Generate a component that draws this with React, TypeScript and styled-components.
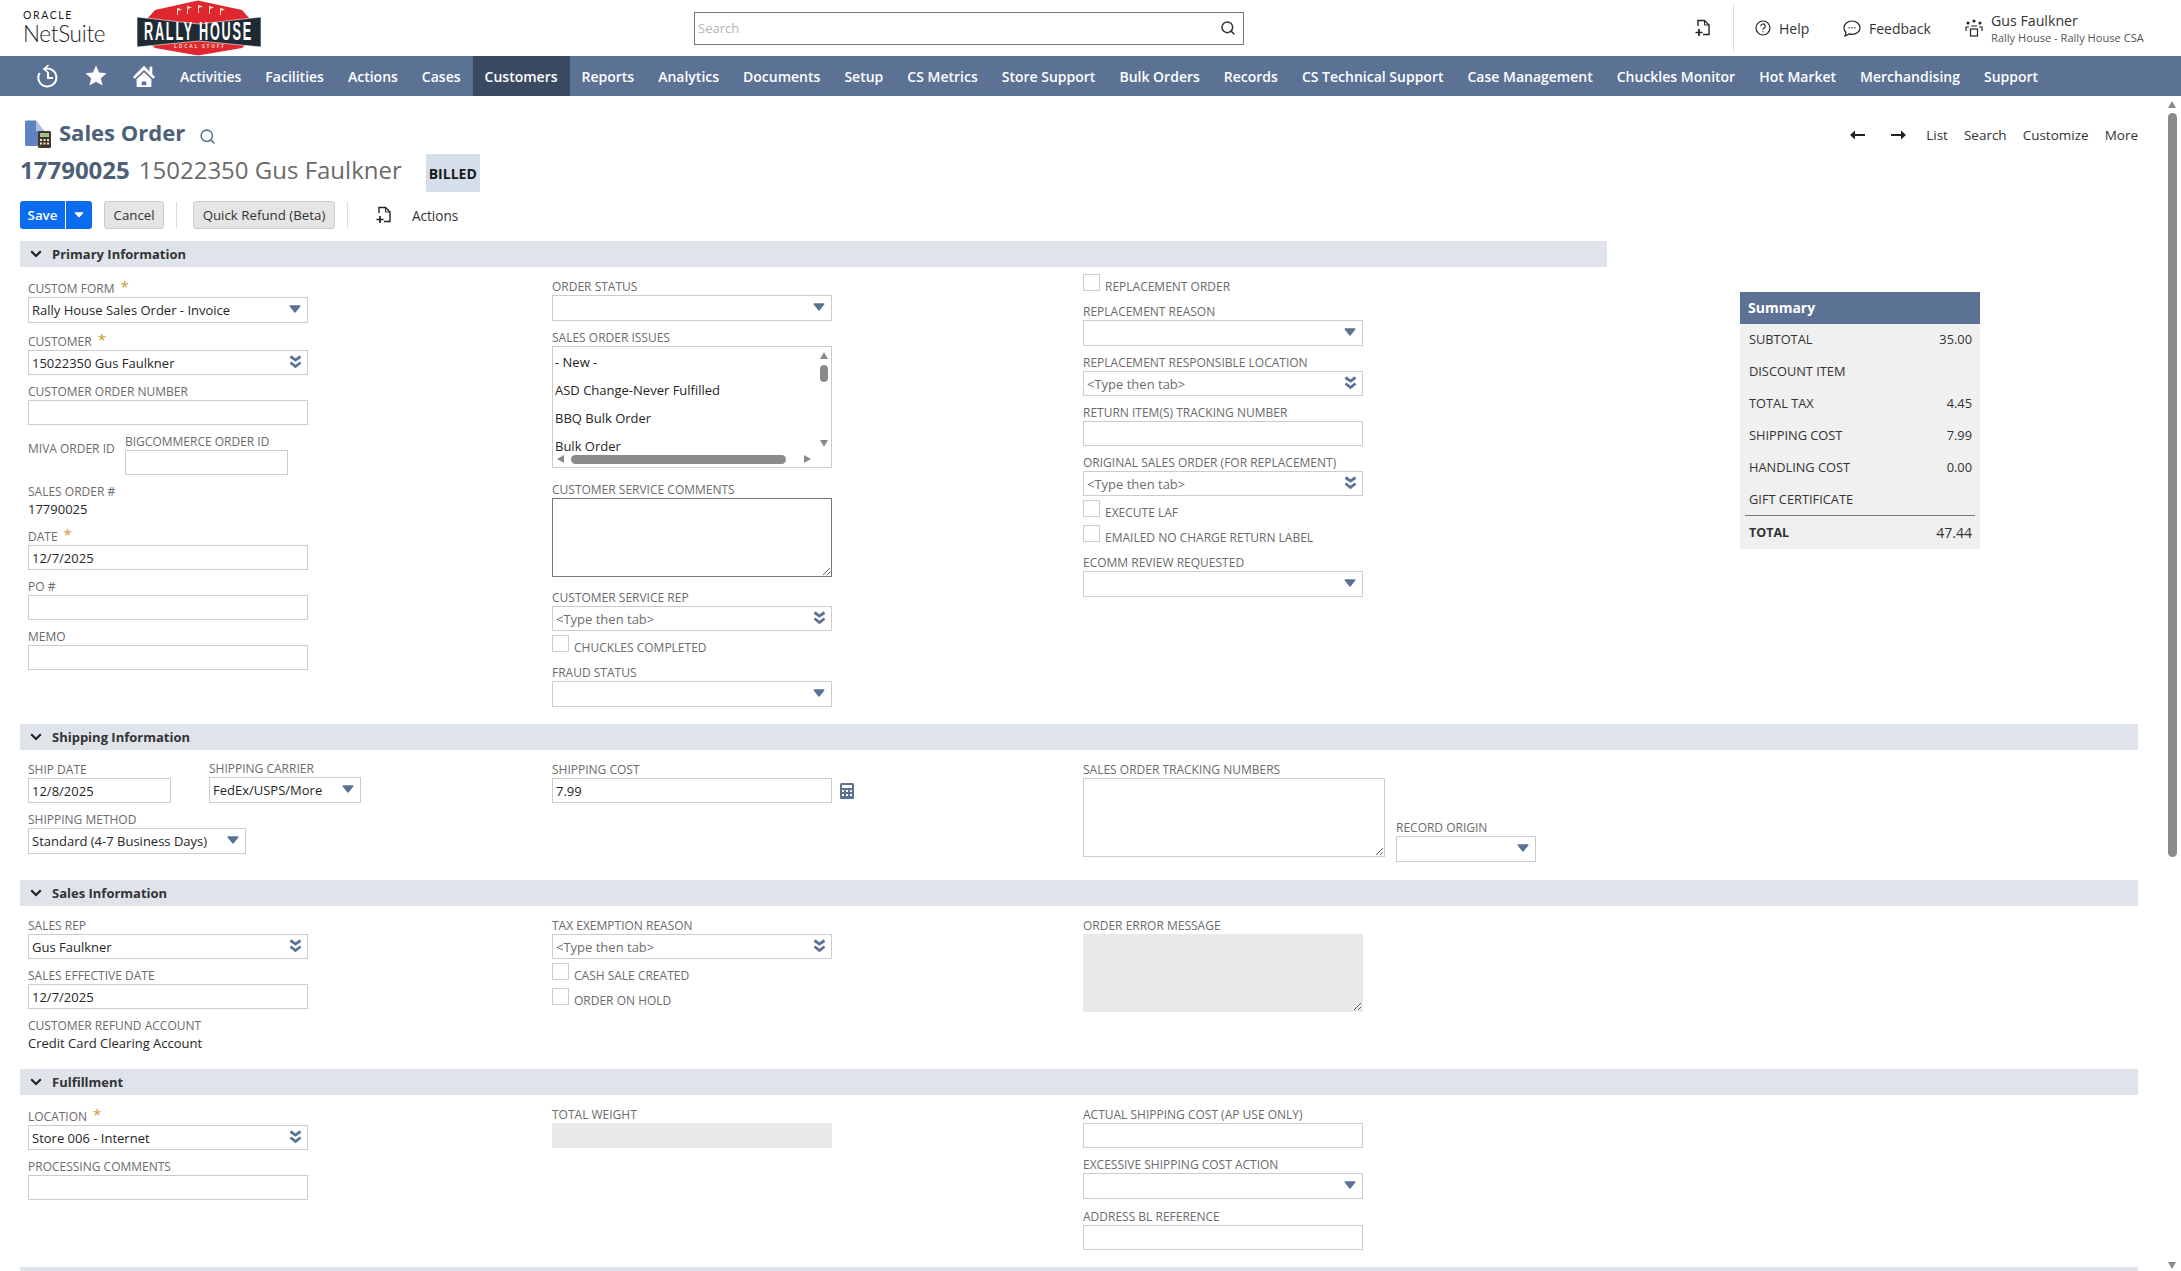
import React from 'react';
import styled, { createGlobalStyle } from 'styled-components';
import { Search } from 'lucide-react';

const BLUE = '#5b7295';
const BORDER = '#cccccc';
const LABEL = '#6b6b6b';
const TEXT = '#262626';

const GlobalStyle = createGlobalStyle`
  html, body {
    margin: 0;
    padding: 0;
    height: 1271px;
    overflow: hidden;
    background: #fff;
    font-family: "Open Sans", "Liberation Sans", sans-serif;
  }
  * { box-sizing: border-box; }
`;

const NAV_ITEMS = [
  'Activities', 'Facilities', 'Actions', 'Cases', 'Customers', 'Reports', 'Analytics', 'Documents',
  'Setup', 'CS Metrics', 'Store Support', 'Bulk Orders', 'Records', 'CS Technical Support',
  'Case Management', 'Chuckles Monitor', 'Hot Market', 'Merchandising', 'Support',
];

const SUMMARY = [
  ['SUBTOTAL', '35.00'],
  ['DISCOUNT ITEM', ''],
  ['TOTAL TAX', '4.45'],
  ['SHIPPING COST', '7.99'],
  ['HANDLING COST', '0.00'],
  ['GIFT CERTIFICATE', ''],
];

function NewRecordIcon({ size = 18 }: { size?: number }) {
  return (
    <svg width={size} height={size} viewBox="0 0 18 18" fill="none" stroke="#222" strokeWidth="1.4">
      <path d="M4 7V1.500h6.500l4.500 4.500v9.500H9" />
      <path d="M10.500 1.500V6H15" strokeWidth="1" />
      <path d="M5 10v7M1.500 13.500h7" strokeWidth="1.700" />
    </svg>
  );
}

function SelectArrow() {
  return (
    <svg width="12" height="8" viewBox="0 0 12 8">
      <path d="M1.200 1h9.600L6 7z" fill={BLUE} stroke={BLUE} strokeWidth="1.400" strokeLinejoin="round" />
    </svg>
  );
}

function LookupArrows() {
  return (
    <LookupSvg width="13" height="14" viewBox="0 0 13 14" fill="none" stroke={BLUE} strokeWidth="2.800">
      <path d="M1.500 1.500l5 3.600 5-3.600M1.500 7.500l5 4 5-4" />
    </LookupSvg>
  );
}

function NetSuiteLogo() {
  return (
    <LogoStack>
      <OracleMark>ORACLE</OracleMark>
      <NetSuiteMark>NetSuite</NetSuiteMark>
    </LogoStack>
  );
}

function RallyLogo() {
  return (
    <LogoSvg width="124" height="56" viewBox="0 0 124 56">
      <path d="M18 10 61 .5 105 10l8 9v22l-8 7-44 7.500-43-7.500-8-7V19z" fill="#e0262f" />
      <path d="M0 17 62 24l62-7v30L62 41 0 47z" fill="#1f2b34" stroke="#fff" strokeWidth=".6" />
      <path
        d="M40 8h1v7h-1zM41 8l4 1.500-4 1.500zM50 6h1v8h-1zM51 6l4 1.500-4 1.500zM61 5h1v8h-1zM62 5l4 1.500-4 1.500zM72 6h1v8h-1zM73 6l4 1.500-4 1.500zM83 8h1v7h-1zM84 8l4 1.500-4 1.500z"
        fill="#f7d7b5"
      />
      <RallyText x="7" y="39.500" textLength="109" lengthAdjust="spacingAndGlyphs">
        RALLY HOUSE
      </RallyText>
      <LocalText x="37" y="47.500" textLength="50" lengthAdjust="spacing">
        LOCAL STUFF
      </LocalText>
    </LogoSvg>
  );
}

function PageIcon() {
  return (
    <svg width="26" height="28" viewBox="0 0 26 28">
      <path d="M0 2a1.500 1.500 0 0 1 1.500-1.500H11L19 11v15H1.500A1.500 1.500 0 0 1 0 24.500z" fill="#5f82c4" />
      <path d="M11 .5 19 11h-8z" fill="#aabfe3" />
      <rect x="13" y="11" width="13" height="17" rx="1.500" fill="#43372c" />
      <rect x="15" y="13" width="9" height="4" fill="#9fc28c" />
      <path d="M15 19h2v2h-2zM18.500 19h2v2h-2zM22 19h2v2h-2zM15 22.500h2v2h-2zM18.500 22.500h2v2h-2zM22 22.500h2v2h-2z" fill="#f0e6d2" />
    </svg>
  );
}

function Field({ label, req, gap = 8, width = 280, children }: {
  label: string;
  req?: boolean;
  gap?: number;
  width?: number;
  children: React.ReactNode;
}) {
  return (
    <FieldWrap $gap={gap} $width={width}>
      <Label>
        {label}
        {req && <Star>*</Star>}
      </Label>
      {children}
    </FieldWrap>
  );
}

function TextField({ label, value, req, gap, width }: {
  label: string;
  value?: string;
  req?: boolean;
  gap?: number;
  width?: number;
}) {
  return (
    <Field label={label} req={req} gap={gap} width={width}>
      <Control>{value}</Control>
    </Field>
  );
}

function SelectField({ label, value, req, gap, width }: {
  label: string;
  value?: string;
  req?: boolean;
  gap?: number;
  width?: number;
}) {
  return (
    <Field label={label} req={req} gap={gap} width={width}>
      <Control $tall>
        <span>{value}</span>
        <SelectArrow />
      </Control>
    </Field>
  );
}

function LookupField({ label, value, req, gap }: {
  label: string;
  value?: string;
  req?: boolean;
  gap?: number;
}) {
  return (
    <Field label={label} req={req} gap={gap}>
      <Control $muted={!value}>
        <span>{value || '<Type then tab>'}</span>
        <LookupArrows />
      </Control>
    </Field>
  );
}

function CheckField({ label, gap = 4 }: { label: string; gap?: number }) {
  return (
    <CheckRow $gap={gap}>
      <CheckBox />
      <CheckLabel>{label}</CheckLabel>
    </CheckRow>
  );
}

function SectionBar({ title }: { title: string }) {
  return (
    <Bar>
      <svg width="12" height="8" viewBox="0 0 12 8" fill="none" stroke="#222" strokeWidth="2.200">
        <path d="M1.200 1.200 6 6l4.800-4.800" />
      </svg>
      <span>{title}</span>
    </Bar>
  );
}

export default function App() {
  return (
    <Page>
      <GlobalStyle />
      <Header>
        <Logos>
          <NetSuiteLogo />
          <RallyLogo />
        </Logos>
        <SearchBox>
          <span>Search</span>
          <Search size={16} color="#333" strokeWidth={2.200} />
        </SearchBox>
        <HeaderRight>
          <NewRecordIcon />
          <HeaderDivider />
          <HeaderLink $width={88}>
            <svg width="16" height="16" viewBox="0 0 16 16" fill="none" stroke="#222" strokeWidth="1.200">
              <circle cx="8" cy="8" r="7" />
              <path d="M5.800 6.200a2.200 2.200 0 1 1 3.300 1.900c-.8.500-1.100.9-1.100 1.700M8 11.200v1.100" />
            </svg>
            Help
          </HeaderLink>
          <HeaderLink $width={122}>
            <svg width="18" height="17" viewBox="0 0 18 17" fill="none" stroke="#222" strokeWidth="1.200">
              <path d="M9 1c4.400 0 8 2.900 8 6.700s-3.600 6.700-8 6.700c-1 0-2-.2-2.900-.5L2 16l1-3.600C1.700 11.100 1 9.500 1 7.700 1 3.900 4.600 1 9 1z" />
              <path d="M5.600 7.800h1M8.500 7.800h1M11.400 7.800h1" strokeWidth="1.600" />
            </svg>
            Feedback
          </HeaderLink>
          <RoleBlock>
            <svg width="18" height="18" viewBox="0 0 18 18" fill="none" stroke="#222" strokeWidth="1.200">
              <circle cx="9" cy="2" r="1.500" fill="#222" stroke="none" />
              <circle cx="3" cy="4" r="1.500" fill="#222" stroke="none" />
              <circle cx="15" cy="4" r="1.500" fill="#222" stroke="none" />
              <path d="M1 12V8h3M17 12V8h-3M6 7h6" />
              <rect x="5.500" y="10" width="7" height="7" />
            </svg>
            <RoleText>
              <RoleName>Gus Faulkner</RoleName>
              <RoleSub>Rally House - Rally House CSA</RoleSub>
            </RoleText>
          </RoleBlock>
        </HeaderRight>
      </Header>

      <Nav>
        <NavIcon>
          <svg width="24" height="24" viewBox="0 0 24 24" fill="none" stroke="#fff" strokeWidth="2">
            <path d="M8 5.200A9 9 0 1 1 3.600 9" />
            <path d="M12.500 1 8 5l4.500 4" strokeWidth="1.600" />
            <path d="M12 8v6h5" />
          </svg>
        </NavIcon>
        <NavIcon>
          <svg width="24" height="24" viewBox="0 0 24 24" fill="#fff">
            <path d="M12 1.500l3.100 7 7.400.7-5.600 5 1.700 7.400L12 17.700l-6.600 3.900 1.700-7.400-5.600-5 7.400-.7z" />
          </svg>
        </NavIcon>
        <NavIcon>
          <svg width="24" height="24" viewBox="0 0 26 26" fill="#fff">
            <path d="M13 2 1 14l2 2L13 6.500 23 16l2-2-3-3V3h-3v5z" />
            <path d="M5 16.500 13 9l8 7.500V25H5zm5.500 2.500v4h5v-4z" fillRule="evenodd" />
          </svg>
        </NavIcon>
        {NAV_ITEMS.map((item) => (
          <NavItem key={item} $active={item === 'Customers'}>
            {item}
          </NavItem>
        ))}
      </Nav>

      <Workspace>
        <Main>
          <TitleRow>
            <PageTitle>
              <PageIcon />
              <h1>Sales Order</h1>
              <Search size={17} color={BLUE} strokeWidth={2.200} />
            </PageTitle>
            <Pager>
              <PagerArrows>
                <svg width="15" height="10" viewBox="0 0 15 10">
                  <path d="M0 5l5-4.500V4h10v2H5v3.500z" fill="#222" />
                </svg>
                <svg width="15" height="10" viewBox="0 0 15 10">
                  <path d="M15 5l-5-4.500V4H0v2h10v3.500z" fill="#222" />
                </svg>
              </PagerArrows>
              <span>List</span>
              <span>Search</span>
              <span>Customize</span>
              <span>More</span>
            </Pager>
          </TitleRow>

          <RecordRow>
            <RecordId>17790025</RecordId>
            <RecordName>15022350 Gus Faulkner</RecordName>
            <StatusBadge>BILLED</StatusBadge>
          </RecordRow>

          <Toolbar>
            <SaveGroup>
              <SaveButton>Save</SaveButton>
              <SaveDrop>
                <svg width="10" height="6" viewBox="0 0 10 6">
                  <path d="M1 .8h8L5 5.200z" fill="#fff" stroke="#fff" strokeLinejoin="round" />
                </svg>
              </SaveDrop>
            </SaveGroup>
            <GrayButton>Cancel</GrayButton>
            <ToolDivider />
            <GrayButton>Quick Refund (Beta)</GrayButton>
            <ToolDivider />
            <ToolAction>
              <NewRecordIcon />
              <span>Actions</span>
            </ToolAction>
          </Toolbar>

          <PrimaryRow>
            <PrimaryLeft>
              <SectionBar title="Primary Information" />
              <Columns $bottom={17}>
                <Column $top={13}>
                  <SelectField label="CUSTOM FORM" value="Rally House Sales Order - Invoice" req gap={0} />
                  <LookupField label="CUSTOMER" value="15022350 Gus Faulkner" req gap={10} />
                  <TextField label="CUSTOMER ORDER NUMBER" />
                  <MivaRow>
                    <MivaLabel>MIVA ORDER ID</MivaLabel>
                    <TextField label="BIGCOMMERCE ORDER ID" width={163} gap={0} />
                  </MivaRow>
                  <Field label="SALES ORDER #">
                    <StaticValue>17790025</StaticValue>
                  </Field>
                  <TextField label="DATE" value="12/7/2025" req gap={11} />
                  <TextField label="PO #" />
                  <TextField label="MEMO" />
                </Column>
                <Column $top={11}>
                  <SelectField label="ORDER STATUS" gap={0} />
                  <Field label="SALES ORDER ISSUES">
                    <ListBox>
                      <ListItems>
                        <ListItem>- New -</ListItem>
                        <ListItem>ASD Change-Never Fulfilled</ListItem>
                        <ListItem>BBQ Bulk Order</ListItem>
                        <ListItem>Bulk Order</ListItem>
                      </ListItems>
                      <VScroll>
                        <ArrowUp />
                        <VThumb />
                        <ArrowDown />
                      </VScroll>
                      <HScroll>
                        <ArrowLeft />
                        <HThumb />
                        <ArrowRight />
                      </HScroll>
                    </ListBox>
                  </Field>
                  <Field label="CUSTOMER SERVICE COMMENTS" gap={13}>
                    <TextArea readOnly $height={79} $dark />
                  </Field>
                  <LookupField label="CUSTOMER SERVICE REP" gap={12} />
                  <CheckField label="CHUCKLES COMPLETED" />
                  <SelectField label="FRAUD STATUS" gap={12} />
                </Column>
                <Column $top={7}>
                  <CheckField label="REPLACEMENT ORDER" gap={0} />
                  <SelectField label="REPLACEMENT REASON" gap={12} />
                  <LookupField label="REPLACEMENT RESPONSIBLE LOCATION" />
                  <TextField label="RETURN ITEM(S) TRACKING NUMBER" />
                  <LookupField label="ORIGINAL SALES ORDER (FOR REPLACEMENT)" />
                  <CheckField label="EXECUTE LAF" />
                  <CheckField label="EMAILED NO CHARGE RETURN LABEL" gap={8} />
                  <SelectField label="ECOMM REVIEW REQUESTED" gap={12} />
                </Column>
              </Columns>
            </PrimaryLeft>
            <Summary>
              <SummaryHead>Summary</SummaryHead>
              <SummaryBody>
                {SUMMARY.map(([name, value]) => (
                  <SummaryRow key={name}>
                    <span>{name}</span>
                    <span>{value}</span>
                  </SummaryRow>
                ))}
                <SummaryTotal>
                  <strong>TOTAL</strong>
                  <span>47.44</span>
                </SummaryTotal>
              </SummaryBody>
            </Summary>
          </PrimaryRow>

          <SectionBar title="Shipping Information" />
          <Columns $bottom={18}>
            <Column $top={11}>
              <ShipRow>
                <TextField label="SHIP DATE" value="12/8/2025" width={143} gap={0} />
                <CarrierShift>
                  <SelectField label="SHIPPING CARRIER" value="FedEx/USPS/More" width={152} gap={0} />
                </CarrierShift>
              </ShipRow>
              <SelectField label="SHIPPING METHOD" value="Standard (4-7 Business Days)" width={218} />
            </Column>
            <Column $top={11}>
              <Field label="SHIPPING COST" gap={0}>
                <CostRow>
                  <Control>7.99</Control>
                  <svg width="14" height="16" viewBox="0 0 14 16">
                    <rect width="14" height="16" rx="1.500" fill={BLUE} />
                    <rect x="2" y="2" width="10" height="3" fill="#fff" />
                    <path d="M2 7h2v2H2zM6 7h2v2H6zM10 7h2v2h-2zM2 11h2v2H2zM6 11h2v2H6zM10 11h2v2h-2z" fill="#fff" />
                  </svg>
                </CostRow>
              </Field>
            </Column>
            <Column $top={11}>
              <TrackingRow>
                <Field label="SALES ORDER TRACKING NUMBERS" gap={0} width={302}>
                  <TextArea readOnly $height={79} />
                </Field>
                <RecordOrigin>
                  <SelectField label="RECORD ORIGIN" width={140} gap={0} />
                </RecordOrigin>
              </TrackingRow>
            </Column>
          </Columns>

          <SectionBar title="Sales Information" />
          <Columns $bottom={18}>
            <Column $top={11}>
              <LookupField label="SALES REP" value="Gus Faulkner" gap={0} />
              <TextField label="SALES EFFECTIVE DATE" value="12/7/2025" />
              <Field label="CUSTOMER REFUND ACCOUNT">
                <StaticValue>Credit Card Clearing Account</StaticValue>
              </Field>
            </Column>
            <Column $top={11}>
              <LookupField label="TAX EXEMPTION REASON" gap={0} />
              <CheckField label="CASH SALE CREATED" />
              <CheckField label="ORDER ON HOLD" gap={8} />
            </Column>
            <Column $top={11}>
              <Field label="ORDER ERROR MESSAGE" gap={0}>
                <TextArea readOnly $height={78} $disabled />
              </Field>
            </Column>
          </Columns>

          <SectionBar title="Fulfillment" />
          <Columns $bottom={17}>
            <Column $top={13}>
              <LookupField label="LOCATION" value="Store 006 - Internet" req gap={0} />
              <TextField label="PROCESSING COMMENTS" />
            </Column>
            <Column $top={11}>
              <Field label="TOTAL WEIGHT" gap={0}>
                <DisabledBox />
              </Field>
            </Column>
            <Column $top={11}>
              <TextField label="ACTUAL SHIPPING COST (AP USE ONLY)" gap={0} />
              <SelectField label="EXCESSIVE SHIPPING COST ACTION" />
              <TextField label="ADDRESS BL REFERENCE" gap={9} />
            </Column>
          </Columns>
          <EmptyBar />
        </Main>
        <ScrollTrack>
          <ArrowUp />
          <PageThumb />
          <ArrowDown />
        </ScrollTrack>
      </Workspace>
    </Page>
  );
}

const Page = styled.div`
  width: 2181px;
  height: 1271px;
  overflow: hidden;
  display: flex;
  flex-direction: column;
  color: ${TEXT};
`;

const Header = styled.header`
  height: 56px;
  flex: none;
  display: flex;
  align-items: center;
`;

const Logos = styled.div`
  display: flex;
  align-items: center;
  width: 694px;
  padding-left: 23px;
  gap: 33px;
`;

const LogoStack = styled.div`
  width: 81px;
  display: flex;
  flex-direction: column;
  color: #1c1c1c;
`;

const OracleMark = styled.span`
  font-family: Lato, sans-serif;
  font-size: 10.500px;
  line-height: 11px;
  letter-spacing: 1.600px;
`;

const NetSuiteMark = styled.span`
  font-family: Lato, sans-serif;
  font-weight: 300;
  font-size: 22.500px;
  line-height: 25px;
  letter-spacing: -0.300px;
  white-space: nowrap;
`;

const LogoSvg = styled.svg`
  flex: none;
  overflow: visible;
`;

const RallyText = styled.text`
  font-family: "Liberation Sans", sans-serif;
  font-weight: 700;
  font-size: 25px;
  letter-spacing: 3.500px;
  fill: #fff;
`;

const LocalText = styled.text`
  font-family: "Open Sans", sans-serif;
  font-weight: 700;
  font-size: 5px;
  fill: #f6dcc0;
`;

const SearchBox = styled.div`
  width: 550px;
  height: 33px;
  border: 1px solid #777;
  display: flex;
  align-items: center;
  justify-content: space-between;
  padding: 0 7px 0 3px;
  font-size: 13px;
  color: #b5b5b5;
`;

const HeaderRight = styled.div`
  display: flex;
  align-items: center;
  margin-left: 450px;
`;

const HeaderDivider = styled.div`
  width: 1px;
  height: 48px;
  background: #ddd;
  margin: 0 21px 0 21px;
`;

const HeaderLink = styled.div<{ $width: number }>`
  width: ${(p) => p.$width}px;
  display: flex;
  align-items: center;
  gap: 8px;
  font-size: 14px;
  color: #333;
`;

const RoleBlock = styled.div`
  display: flex;
  align-items: center;
  gap: 8px;
`;

const RoleText = styled.div`
  display: flex;
  flex-direction: column;
  padding-top: 2px;
`;

const RoleName = styled.span`
  font-size: 14.200px;
  line-height: 18px;
  color: #333;
`;

const RoleSub = styled.span`
  font-size: 11.100px;
  line-height: 16px;
  color: #555;
`;

const Nav = styled.nav`
  height: 40px;
  flex: none;
  display: flex;
  align-items: stretch;
  background: ${BLUE};
  padding-left: 24px;
`;

const NavIcon = styled.div`
  width: 48px;
  display: flex;
  align-items: center;
  justify-content: center;
`;

const NavItem = styled.div<{ $active?: boolean }>`
  display: flex;
  align-items: center;
  padding: 0 12px;
  font-size: 14px;
  font-weight: 600;
  color: #fff;
  white-space: nowrap;
  background: ${(p) => (p.$active ? '#3a4a63' : 'transparent')};
`;

const Workspace = styled.div`
  flex: 1;
  min-height: 0;
  display: flex;
`;

const Main = styled.main`
  flex: 1;
  min-width: 0;
  overflow: hidden;
  padding: 24px 28px 0 20px;
`;

const TitleRow = styled.div`
  height: 27px;
  display: flex;
  justify-content: space-between;
`;

const PageTitle = styled.div`
  display: flex;
  align-items: center;
  padding-left: 5px;
  color: #4d5f79;
  h1 {
    margin: -2px 14px 0 8px;
    font-size: 22px;
    line-height: 27px;
    font-weight: 700;
  }
  svg:last-child {
    margin-top: 5px;
  }
`;

const Pager = styled.div`
  display: flex;
  align-items: center;
  gap: 16px;
  padding-top: 3px;
  font-size: 13.500px;
  color: #333;
`;

const PagerArrows = styled.div`
  display: flex;
  gap: 26px;
  margin-right: 4px;
`;

const RecordRow = styled.div`
  margin-top: 7px;
  height: 38px;
  display: flex;
  align-items: center;
`;

const RecordId = styled.span`
  font-size: 24px;
  font-weight: 700;
  color: #4d5f79;
  margin: -8px 9px 0 0;
`;

const RecordName = styled.span`
  font-size: 24px;
  color: #6b6b6b;
  margin: -8px 24px 0 0;
`;

const StatusBadge = styled.span`
  height: 38px;
  width: 54px;
  display: flex;
  align-items: center;
  justify-content: center;
  background: #d5dfeb;
  font-size: 14px;
  font-weight: 700;
  color: #1a1a1a;
`;

const Toolbar = styled.div`
  margin-top: 9px;
  height: 28px;
  display: flex;
  align-items: center;
  font-size: 13.300px;
`;

const SaveGroup = styled.div`
  display: flex;
  height: 28px;
  width: 72px;
  margin-right: 12px;
  border-radius: 3px;
  overflow: hidden;
  background: #0b6cf2;
  color: #fff;
  font-weight: 600;
`;

const SaveButton = styled.div`
  width: 46px;
  display: flex;
  align-items: center;
  justify-content: center;
  border-right: 1px solid #fff;
`;

const SaveDrop = styled.div`
  flex: 1;
  display: flex;
  align-items: center;
  justify-content: center;
`;

const GrayButton = styled.div`
  height: 28px;
  padding: 0 8.500px;
  display: flex;
  align-items: center;
  background: #e5e5e5;
  border: 1px solid #ccc;
  border-radius: 3px;
  color: #333;
  font-weight: 500;
  white-space: nowrap;
`;

const ToolDivider = styled.div`
  width: 1px;
  height: 26px;
  background: #ddd;
  margin: 0 16px 0 12px;
`;

const ToolAction = styled.div`
  display: flex;
  align-items: center;
  gap: 19px;
  margin-left: 11px;
  font-size: 13.600px;
  color: #333;
`;

const Bar = styled.div`
  height: 26px;
  display: flex;
  align-items: center;
  gap: 10px;
  padding-left: 10px;
  background: #dfe4eb;
  font-size: 13px;
  font-weight: 700;
  color: #333;
`;

const EmptyBar = styled.div`
  height: 26px;
  background: #dfe4eb;
`;

const PrimaryRow = styled.div`
  margin-top: 12px;
  display: flex;
`;

const PrimaryLeft = styled.div`
  width: 1587px;
`;

const Columns = styled.div<{ $bottom: number }>`
  display: grid;
  grid-template-columns: 524px 531px 1fr;
  padding: 0 0 ${(p) => p.$bottom}px 8px;
`;

const Column = styled.div<{ $top: number }>`
  padding-top: ${(p) => p.$top}px;
`;

const FieldWrap = styled.div<{ $gap: number; $width: number }>`
  margin-top: ${(p) => p.$gap}px;
  width: ${(p) => p.$width}px;
`;

const Label = styled.div`
  height: 17px;
  font-size: 12px;
  line-height: 18px;
  color: ${LABEL};
  white-space: nowrap;
`;

const Star = styled.span`
  color: #c99a2e;
  font-size: 15px;
  line-height: 12px;
  margin-left: 6px;
  vertical-align: 1px;
`;

const Control = styled.div<{ $tall?: boolean; $muted?: boolean }>`
  height: ${(p) => (p.$tall ? 26 : 25)}px;
  flex: 1;
  border: 1px solid ${BORDER};
  display: flex;
  align-items: center;
  justify-content: space-between;
  padding: 0 6px 0 3px;
  font-size: 13px;
  color: ${(p) => (p.$muted ? '#6e6e6e' : TEXT)};
  white-space: nowrap;
  overflow: hidden;
  svg { flex: none; margin-top: -2px; }
`;

const LookupSvg = styled.svg`
  margin-right: -1px;
`;

const StaticValue = styled.div`
  margin-top: 1px;
  height: 16px;
  font-size: 13px;
  line-height: 16px;
  color: ${TEXT};
  white-space: nowrap;
`;

const MivaRow = styled.div`
  margin-top: 8px;
  display: flex;
`;

const MivaLabel = styled.div`
  width: 97px;
  margin-top: 8px;
  font-size: 12px;
  line-height: 16px;
  color: ${LABEL};
  white-space: nowrap;
`;

const CheckRow = styled.div<{ $gap: number }>`
  margin-top: ${(p) => p.$gap}px;
  height: 17px;
  display: flex;
  gap: 5px;
`;

const CheckBox = styled.div`
  width: 17px;
  height: 17px;
  border: 1px solid ${BORDER};
`;

const CheckLabel = styled.div`
  margin-top: 5px;
  font-size: 12px;
  line-height: 16px;
  color: ${LABEL};
  white-space: nowrap;
`;

const ListBox = styled.div`
  height: 122px;
  border: 1px solid ${BORDER};
  display: grid;
  grid-template-columns: 1fr 15px;
  grid-template-rows: 1fr 16px;
`;

const ListItems = styled.div`
  padding: 1px 0 0 2px;
  min-height: 0;
`;

const ListItem = styled.div`
  height: 28px;
  line-height: 28px;
  font-size: 13px;
  color: ${TEXT};
  white-space: nowrap;
`;

const VScroll = styled.div`
  display: flex;
  flex-direction: column;
  align-items: center;
  padding: 5px 0 4px;
`;

const VThumb = styled.div`
  width: 8px;
  height: 17px;
  margin: 6px 0 auto;
  border-radius: 4px;
  background: #8a8a8a;
`;

const HScroll = styled.div`
  display: flex;
  align-items: center;
  padding: 0 5px 0 4px;
  gap: 7px;
`;

const HThumb = styled.div`
  width: 215px;
  height: 9px;
  border-radius: 4.500px;
  background: #8a8a8a;
  margin-right: auto;
`;

const ArrowUp = styled.div`
  flex: none;
  width: 0;
  height: 0;
  border-left: 4.500px solid transparent;
  border-right: 4.500px solid transparent;
  border-bottom: 7px solid #8a8a8a;
`;

const ArrowDown = styled.div`
  flex: none;
  width: 0;
  height: 0;
  border-left: 4.500px solid transparent;
  border-right: 4.500px solid transparent;
  border-top: 7px solid #8a8a8a;
`;

const ArrowLeft = styled.div`
  flex: none;
  width: 0;
  height: 0;
  border-top: 4.500px solid transparent;
  border-bottom: 4.500px solid transparent;
  border-right: 7px solid #8a8a8a;
`;

const ArrowRight = styled.div`
  flex: none;
  width: 0;
  height: 0;
  border-top: 4.500px solid transparent;
  border-bottom: 4.500px solid transparent;
  border-left: 7px solid #8a8a8a;
`;

const TextArea = styled.textarea<{ $height: number; $dark?: boolean; $disabled?: boolean }>`
  display: block;
  width: 100%;
  height: ${(p) => p.$height}px;
  resize: both;
  outline: none;
  background: ${(p) => (p.$disabled ? '#e9e9e9' : '#fff')};
  border: 1px solid ${(p) => (p.$disabled ? '#e9e9e9' : p.$dark ? '#777' : BORDER)};
  border-radius: 0;
`;

const DisabledBox = styled.div`
  height: 25px;
  background: #e9e9e9;
`;

const Summary = styled.aside`
  width: 240px;
  height: 257px;
  margin: 51px 0 0 133px;
  background: #f0f0f0;
`;

const SummaryHead = styled.div`
  height: 32px;
  display: flex;
  align-items: center;
  padding: 0 0 2px 8px;
  background: ${BLUE};
  color: #fff;
  font-size: 14px;
  font-weight: 700;
`;

const SummaryBody = styled.div`
  margin-top: -1px;
  padding: 0 5px;
  font-size: 12.800px;
  color: #333;
`;

const SummaryRow = styled.div`
  height: 32px;
  display: flex;
  align-items: center;
  justify-content: space-between;
  padding: 0 3px 0 4px;
`;

const SummaryTotal = styled(SummaryRow)`
  height: 33px;
  border-top: 1px solid #777;
  strong { font-weight: 700; font-size: 12.500px; }
  span { font-size: 14px; }
`;

const ShipRow = styled.div`
  display: flex;
  gap: 38px;
`;

const CarrierShift = styled.div`
  margin-top: -1px;
`;

const CostRow = styled.div`
  display: flex;
  align-items: center;
  width: 302px;
  gap: 8px;
  svg { flex: none; }
`;

const TrackingRow = styled.div`
  display: flex;
  gap: 11px;
`;

const RecordOrigin = styled.div`
  margin-top: 58px;
`;

const ScrollTrack = styled.div`
  width: 15px;
  flex: none;
  display: flex;
  flex-direction: column;
  align-items: center;
  padding: 5px 3px 2px 0;
`;

const PageThumb = styled.div`
  width: 9px;
  height: 744px;
  margin: 5px 0 auto;
  border-radius: 4.500px;
  background: #8a8a8a;
`;
